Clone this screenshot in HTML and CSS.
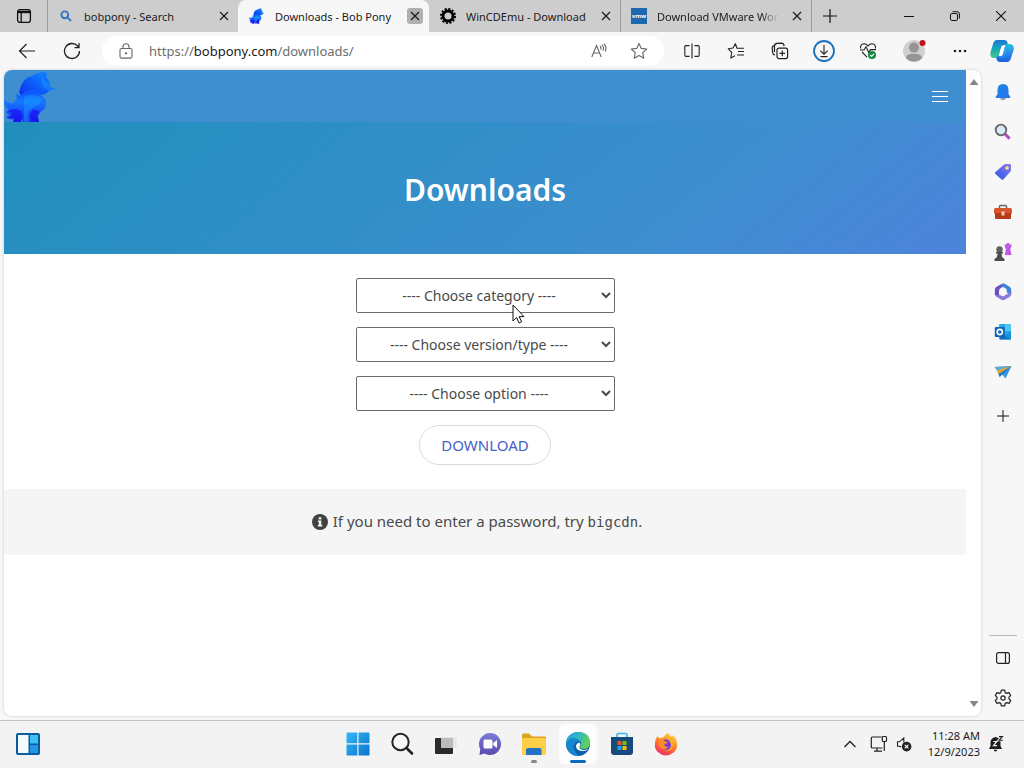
FILE: index.html
```html
<!DOCTYPE html>
<html lang="en">
<head>
    <meta charset="UTF-8">
    <meta name="viewport" content="width=device-width, initial-scale=1.0">
    <title>Downloads - Bob Pony</title>
    <link rel="stylesheet" href="styles.css">
</head>
<body>

<!-- shared shapes -->
<svg class="defs" width="0" height="0" aria-hidden="true">
    <defs>
        <linearGradient id="g-pony" x1="0" y1="0" x2="0" y2="1">
            <stop offset="0" stop-color="#0e7cff"/><stop offset="0.4" stop-color="#0b58fa"/><stop offset="0.6" stop-color="#1478ff"/><stop offset="1" stop-color="#1a28f5"/>
        </linearGradient>
        <linearGradient id="g-mane" x1="0" y1="1" x2="1" y2="0">
            <stop offset="0" stop-color="#0c2cf0"/><stop offset="1" stop-color="#0e8aff"/>
        </linearGradient>
        <linearGradient id="g-blue" x1="0" y1="0" x2="1" y2="1">
            <stop offset="0" stop-color="#35b8f5"/><stop offset="1" stop-color="#0873cf"/>
        </linearGradient>
        <linearGradient id="g-bell" x1="0" y1="0" x2="1" y2="1">
            <stop offset="0" stop-color="#1a8ae0"/><stop offset="1" stop-color="#2f6ff5"/>
        </linearGradient>
        <linearGradient id="g-tag" x1="0" y1="1" x2="1" y2="0">
            <stop offset="0" stop-color="#2b55e0"/><stop offset="1" stop-color="#8a7cf5"/>
        </linearGradient>
        <linearGradient id="g-cop1" x1="0" y1="0" x2="0" y2="1">
            <stop offset="0" stop-color="#1c79d4"/><stop offset="0.5" stop-color="#17a6b8"/><stop offset="1" stop-color="#49c98a"/>
        </linearGradient>
        <linearGradient id="g-cop2" x1="0" y1="0" x2="0" y2="1">
            <stop offset="0" stop-color="#1fc4d8"/><stop offset="0.5" stop-color="#2a8af0"/><stop offset="1" stop-color="#1a5fe0"/>
        </linearGradient>
        <linearGradient id="g-edge" x1="0" y1="0" x2="1" y2="0.3">
            <stop offset="0" stop-color="#1b9de0"/><stop offset="0.5" stop-color="#2bb8c8"/><stop offset="1" stop-color="#5fd05a"/>
        </linearGradient>
        <linearGradient id="g-chat" x1="0" y1="0" x2="0" y2="1">
            <stop offset="0" stop-color="#7a7ed8"/><stop offset="1" stop-color="#5a48b0"/>
        </linearGradient>
        <linearGradient id="g-fox" x1="0.8" y1="0" x2="0.3" y2="1">
            <stop offset="0" stop-color="#ffd83a"/><stop offset="0.45" stop-color="#ff8a2a"/><stop offset="1" stop-color="#f02a6a"/>
        </linearGradient>
        <symbol id="pony" viewBox="0 0 54 54">
            <path fill="url(#g-pony)" d="M16 19Q19 8 28 6Q33 3 39 2L43 3L42 7Q46 11 46 17L51 19L45 21Q42 25 36 25Q42 28 42 33Q41 41 36 42L34 46L35 52H19L18 48L17 52H9L10 49Q4 50 2 47L7 45Q2 45 2 41L5 40Q0 37 0 30Q4 34 9 33L13 29L12 24L16 26Z"/>
            <path fill="url(#g-mane)" d="M16 19Q19 8 28 6Q33 3 39 2Q35 7 37 13Q39 19 42 22Q34 20 28 20Q20 20 18 25L15 23Z"/>
            <path fill="#18a0ff" opacity="0.45" d="M39 4Q38 10 44 12Q46 15 46 17L51 19L45 21L40 18Q35 11 39 4ZM20 27Q30 22 39 29Q38 34 31 36L24 42L25 52H20L20 43Z"/>
            <path fill="#1a0af0" opacity="0.65" d="M4 41Q11 37 17 41Q19 46 17 52H9L10 48L4 47L9 44ZM28 40Q33 39 36 42L33 46L35 52H28L26 46Z"/>
        </symbol>
        <symbol id="close" viewBox="0 0 12 12">
            <path d="M2 2L10 10M10 2L2 10" stroke="currentColor" stroke-width="1.2" fill="none"/>
        </symbol>
    </defs>
</svg>

<header class="tabs">
    <button class="tab-actions" aria-label="Tab actions">
        <svg width="16" height="16" viewBox="0 0 16 16" fill="none" stroke="#111" stroke-width="1.3"><rect x="1.6" y="1.6" width="12.8" height="12.8" rx="2.5"/><path d="M2 4H14" stroke-width="2.4"/><path d="M5.2 5V14"/></svg>
    </button>
    <div class="tab">
        <svg width="16" height="16" viewBox="0 0 16 16" fill="none" stroke="#2f77c0" stroke-width="1.9"><circle cx="6.8" cy="6.8" r="3.4"/><path d="M9.4 9.4L13 13"/></svg>
        <span class="tab-title">bobpony - Search</span>
        <button class="tab-close" aria-label="Close tab"><svg width="12" height="12"><use href="#close"/></svg></button>
    </div>
    <div class="tab active">
        <svg width="16" height="16"><use href="#pony"/></svg>
        <span class="tab-title">Downloads - Bob Pony</span>
        <button class="tab-close" aria-label="Close tab"><svg width="12" height="12"><use href="#close"/></svg></button>
    </div>
    <div class="tab">
        <svg width="16" height="16" viewBox="0 0 16 16" fill="none" stroke="#000"><circle cx="8" cy="8" r="5" stroke-width="2.8"/><circle cx="8" cy="8" r="7.1" stroke-width="1.8" stroke-dasharray="2.2 1.52"/></svg>
        <span class="tab-title">WinCDEmu - Download</span>
        <button class="tab-close" aria-label="Close tab"><svg width="12" height="12"><use href="#close"/></svg></button>
    </div>
    <div class="tab">
        <svg width="16" height="16" viewBox="0 0 16 16"><rect width="16" height="16" fill="#1c68b0"/><text x="8" y="10" class="vmw" text-anchor="middle">vmw</text></svg>
        <span class="tab-title fade">Download VMware Wor</span>
        <button class="tab-close" aria-label="Close tab"><svg width="12" height="12"><use href="#close"/></svg></button>
    </div>
    <button class="new-tab" aria-label="New tab">
        <svg width="14" height="14" viewBox="0 0 14 14" stroke="#111" stroke-width="1.2"><path d="M7 0V14M0 7H14"/></svg>
    </button>
    <div class="window-controls">
        <button aria-label="Minimize"><svg width="10" height="10" viewBox="0 0 10 10" stroke="#111"><path d="M0 5.5H10"/></svg></button>
        <button aria-label="Restore"><svg width="10" height="10" viewBox="0 0 10 10" stroke="#111" fill="none"><rect x="0.5" y="2.5" width="7" height="7" rx="1.3"/><path d="M2.5 0.7H7Q9.4 0.7 9.4 3V7.5"/></svg></button>
        <button aria-label="Close"><svg width="10" height="10" viewBox="0 0 10 10" stroke="#111" stroke-width="1.1"><path d="M0 0L10 10M10 0L0 10"/></svg></button>
    </div>
</header>

<nav class="toolbar">
    <button class="nav-button" aria-label="Back"><svg width="18" height="16" viewBox="0 0 18 16" fill="none" stroke="#222" stroke-width="1.2"><path d="M17 8H1.5M8.5 1L1.5 8L8.5 15"/></svg></button>
    <button class="nav-button" aria-label="Refresh"><svg width="18" height="18" viewBox="0 0 18 18" fill="none" stroke="#222" stroke-width="1.3"><path d="M16.5 9A7.5 7.5 0 1 1 14.6 4L16 5.5M16 1V5.6H11.5"/></svg></button>
    <div class="address">
        <svg width="14" height="16" viewBox="0 0 14 16" fill="none" stroke="#666" stroke-width="1.1"><rect x="1" y="5.5" width="12" height="9.6" rx="1.6"/><path d="M4 5.5V3.8A3 3 0 0 1 10 3.8V5.5"/><circle cx="7" cy="10.3" r="0.6" fill="#555"/></svg>
        <a class="url" href="#">https://<b>bobpony.com</b>/downloads/</a>
        <button aria-label="Read aloud"><svg width="16" height="16" viewBox="0 0 16 16" fill="none" stroke="#666" stroke-width="1.1"><path d="M0.8 14L5.5 2.5L10.2 14M2.5 10H8.6M9 3Q10.5 4.5 9.7 6.8M11 1.6Q13.4 4.2 12 7.6M13 0.6Q16.2 4.2 14.2 8.4"/></svg></button>
        <button aria-label="Add to favorites"><svg width="18" height="18" viewBox="0 0 18 18" fill="none" stroke="#666" stroke-width="1.1" stroke-linejoin="round"><path d="M9 1.5L11.3 6.4L16.7 7L12.7 10.7L13.8 16.2L9 13.5L4.2 16.2L5.3 10.7L1.3 7L6.7 6.4Z"/></svg></button>
    </div>
    <button class="tool" aria-label="Split screen"><svg width="16" height="16" viewBox="0 0 16 16" fill="none" stroke="#222" stroke-width="1.1"><path d="M5.5 2.6H2Q0.8 2.6 0.8 4V12Q0.8 13.4 2 13.4H5.5M10.5 2.6H14Q15.2 2.6 15.2 4V12Q15.2 13.4 14 13.4H10.5M8 0.5V15.5"/></svg></button>
    <button class="tool" aria-label="Favorites"><svg width="18" height="18" viewBox="0 0 18 18" fill="none" stroke="#222" stroke-width="1.1" stroke-linejoin="round"><path d="M9.5 6.2H10L8.4 1.8L6 6L1.3 6.8L4.7 10.4L3.8 16L8 13.8M9.5 6.2H17M11 9.5H17M10 13H17"/></svg></button>
    <button class="tool" aria-label="Collections"><svg width="18" height="18" viewBox="0 0 18 18" fill="none" stroke="#222" stroke-width="1.2"><rect x="6" y="6.2" width="10.6" height="10.4" rx="2"/><path d="M11.3 8.6V14.2M8.5 11.4H14.1M4 13Q1.8 12.6 1.6 10.4L1.2 6Q1.1 4 3 3.6L3.6 3.5M3.5 10V4.2Q3.5 1.6 6 1.4L10.5 1.2Q12.6 1.2 13.2 4"/></svg></button>
    <button class="tool" aria-label="Downloads"><svg width="22" height="22" viewBox="0 0 22 22" fill="none" stroke="#222" stroke-width="1.1"><circle cx="11" cy="11" r="10" stroke="#1a70c0" stroke-width="1.8"/><path d="M11 5V14M7.3 10.6L11 14.2L14.7 10.6M7.5 16.6H14.5"/></svg></button>
    <button class="tool" aria-label="Browser essentials"><svg width="18" height="18" viewBox="0 0 18 18" fill="none" stroke="#222" stroke-width="1.1"><path d="M1.6 6.5Q1 2 5 1.8Q7.5 1.8 9 4Q10.5 1.8 13 1.8Q17 2 16.4 6.5M3 10L8 15.2M1 8H5L7 4.8L9.8 10.5L11.4 7.6H17"/><circle cx="13" cy="13" r="4" fill="#12893a" stroke="none"/><path d="M11.2 13L12.6 14.4L15 11.8" stroke="#fff"/></svg></button>
    <button class="profile" aria-label="Profile">
        <svg width="24" height="24" viewBox="0 0 24 24"><circle cx="12" cy="12" r="11" fill="#d2d0ce"/><circle cx="12" cy="8.6" r="5" fill="#979593"/><path d="M4 19Q4 14.8 12 14.8T20 19Q17 22.6 12 22.6T4 19Z" fill="#979593"/><circle cx="20.5" cy="4" r="3" fill="#c50f1f"/></svg>
    </button>
    <button class="tool" aria-label="Settings and more"><svg width="16" height="4" viewBox="0 0 16 4" fill="#222"><circle cx="3" cy="2" r="1.3"/><circle cx="8" cy="2" r="1.3"/><circle cx="13" cy="2" r="1.3"/></svg></button>
    <button class="copilot" aria-label="Copilot">
        <svg width="24" height="22" viewBox="0 0 24 22"><path fill="url(#g-cop1)" d="M7 0H14Q17 0 17.6 3L18 5H14Q12 5 11.4 7L9 15Q8 18 5 18H3Q-0.6 17 0.6 12L3 4Q4 0 7 0Z"/><path fill="url(#g-cop2)" d="M16 4H20Q24.8 5 23.6 10L21 18Q20 22 17 22H10Q7 22 6.2 18L6 17Q8.5 17 9.4 14L12 6H15Z"/><path fill="#fff" d="M11.5 6H15.2L12.8 14.6Q12.4 16 11 16H8.8Z"/><path fill="#26a7ee" opacity="0.5" d="M15 6H18L15.5 14Q14.6 17 12 18L8 17Q11.7 17.3 12.8 14Z"/></svg>
    </button>
</nav>

<main class="window">
    <div class="page">
        <div class="content">
            <div class="navbar">
                <a href="#" class="brand" aria-label="Bob Pony"><svg width="54" height="54"><use href="#pony"/></svg></a>
                <button class="burger" aria-label="Menu"><span></span><span></span><span></span></button>
            </div>
            <section class="hero">
                <h1>Downloads</h1>
            </section>
            <form class="downloads">
                <select aria-label="Category">
                    <option>---- Choose category ----</option>
                </select>
                <select aria-label="Version or type">
                    <option>---- Choose version/type ----</option>
                </select>
                <select aria-label="Option">
                    <option>---- Choose option ----</option>
                </select>
                <button type="button" class="download-button">DOWNLOAD</button>
            </form>
            <div class="notice">
                <svg width="16" height="16" viewBox="0 0 16 16"><circle cx="8" cy="8" r="8" fill="#424242"/><path fill="#f5f5f5" d="M6.7 3.2H9.3V5.4H6.7ZM6 6.6H9.3V11H10.3V12.5H5.8V11H6.8V8H6Z"/></svg>
                <p>If you need to enter a password, try <code>bigcdn</code>.</p>
            </div>
        </div>
        <div class="scrollbar">
            <svg width="10" height="8" viewBox="0 0 10 8" fill="#858585"><path d="M5 1L9.4 7H0.6Z"/></svg>
            <svg width="10" height="8" viewBox="0 0 10 8" fill="#858585"><path d="M5 7L9.4 1H0.6Z"/></svg>
        </div>
    </div>

    <aside class="sidebar">
        <button aria-label="Notifications"><svg width="18" height="18" viewBox="0 0 18 18"><path d="M6 14.5H12Q11.5 17.3 9 17.3T6 14.5Z" fill="#8ba0b5"/><path d="M9 1Q14.5 1 14.5 7V11L16.4 14Q16.5 15 15.5 15H2.5Q1.5 15 1.6 14L3.5 11V7Q3.5 1 9 1Z" fill="url(#g-bell)"/></svg></button>
        <button aria-label="Search"><svg width="18" height="18" viewBox="0 0 18 18" fill="none"><path d="M11 11L15.6 15.6" stroke="#b04cc8" stroke-width="3"/><circle cx="7" cy="7" r="5.3" fill="#d8e9f5" stroke="#666" stroke-width="1.8"/></svg></button>
        <button aria-label="Shopping"><svg width="18" height="18" viewBox="0 0 18 18"><path d="M9.5 2Q10.5 1 12 1H16Q17 1 17 2V7Q17 8 16 9L9.5 16.3Q8.5 17.4 7.4 16.3L1.5 11Q0.4 10 1.5 9Z" fill="url(#g-tag)"/><circle cx="13" cy="5" r="1.8" fill="#ffe36b"/></svg></button>
        <button aria-label="Tools"><svg width="20" height="18" viewBox="0 0 20 18"><path d="M6.5 6V3.5Q6.5 2.5 7.5 2.5H12.5Q13.5 2.5 13.5 3.5V6" fill="none" stroke="#666" stroke-width="1.5"/><rect x="1" y="5" width="18" height="6" rx="1.5" fill="#d9532b"/><path d="M2 10H18V15Q18 16 17 16H3Q2 16 2 15Z" fill="#b63b18"/><rect x="8.5" y="8.5" width="3" height="4" fill="#f2d0b8"/></svg></button>
        <button aria-label="Games"><svg width="20" height="20" viewBox="0 0 20 20"><path d="M11.5 1.5L13 3L14 1H16L17 3L18.8 1.5L18 6L17.2 7L18.5 13H11.8L13 7L12.2 6Z" fill="#c05ae6"/><circle cx="6.5" cy="7.5" r="3.2" fill="#606060"/><path d="M3 10H10V11.5H8.5L9 15L11.5 17V19H1.5V17L4 15L4.6 11.5H3Z" fill="#4c4c4c"/></svg></button>
        <button aria-label="Microsoft 365"><svg width="18" height="18" viewBox="0 0 18 18"><path d="M8 0.8L2.2 4Q0.8 5 0.8 7V12L5 14.2V8Q5 6 6.8 5L11 2.5Z" fill="#6c4fc0"/><path d="M8 0.8Q10 0 12 1.4L16 4Q17.2 5 17.2 7V12L12.8 9.5V7.2Q12.8 6 11 5L7 3Z" fill="#3d85dc"/><path d="M17.2 8.5V11Q17.2 13 15.5 14L11 16.6Q9 17.8 7 16.6L1.6 13.3L5 11.5L8 13Q9 13.6 10 13L12.8 11.2Z" fill="#8878dc"/></svg></button>
        <button aria-label="Outlook"><svg width="18" height="18" viewBox="0 0 18 18"><rect x="5" y="1" width="12" height="15.5" rx="1" fill="#28a8ea"/><path d="M11 1H17V8H11Z" fill="#50c5f2"/><path d="M5 9L17 16.5H6Z" fill="#0f6fc2"/><path d="M17 8V16.5L10.5 12.2Z" fill="#1493dc"/><rect x="0.8" y="4" width="10" height="10" rx="1" fill="#0d63b5"/><circle cx="5.8" cy="9" r="2.6" fill="none" stroke="#fff" stroke-width="1.6"/></svg></button>
        <button aria-label="Drop"><svg width="18" height="16" viewBox="0 0 18 16"><path d="M0.5 3L17.5 2L11.5 14.5L8.2 10.5Z" fill="#3794e6"/><path d="M0.5 3L17.5 2L3.5 7.5Z" fill="#65a9ca"/><path d="M17.5 2L4.5 11L3 6.5Z" fill="#dfa82c"/><path d="M17.5 2L5.5 13.2L4.5 10Z" fill="#2678cf"/></svg></button>
        <button class="add" aria-label="Add"><svg width="12" height="12" viewBox="0 0 12 12" stroke="#111" stroke-width="1"><path d="M6 0V12M0 6H12"/></svg></button>
        <div class="sidebar-bottom">
            <button aria-label="Hide sidebar"><svg width="16" height="14" viewBox="0 0 16 14" fill="none" stroke="#222" stroke-width="1.2"><rect x="1.6" y="1.6" width="12.8" height="10.8" rx="2"/><path d="M10.5 1.6V12.4"/></svg></button>
            <button aria-label="Settings"><svg width="18" height="18" viewBox="0 0 18 18" fill="none" stroke="#222" stroke-width="1.2" stroke-linejoin="round"><path d="M7.3 1.2H10.7L11.2 3.6L12.7 4.4L15 3.6L16.7 6.5L15 8.1V9.9L16.7 11.5L15 14.4L12.7 13.6L11.2 14.4L10.7 16.8H7.3L6.8 14.4L5.3 13.6L3 14.4L1.3 11.5L3 9.9V8.1L1.3 6.5L3 3.6L5.3 4.4L6.8 3.6Z"/><circle cx="9" cy="9" r="2.2"/></svg></button>
        </div>
    </aside>
</main>

<footer class="taskbar">
    <div class="taskbar-left">
        <button aria-label="Widgets"><svg width="26" height="24" viewBox="0 0 26 24"><rect x="1" y="1" width="24" height="22" rx="2" fill="#0b5a9c"/><rect x="3" y="3" width="10.5" height="18" fill="#f4fbff"/><rect x="15" y="3" width="8" height="8.5" fill="#3cc0f5"/><rect x="15" y="13" width="8" height="8" fill="#2397e5"/></svg></button>
    </div>
    <div class="apps">
        <button aria-label="Start"><svg width="24" height="24" viewBox="0 0 24 24" fill="url(#g-blue)"><path d="M1.5 0.5H11.3V11.3H0.5V1.5Q0.5 0.5 1.5 0.5ZM12.5 0.5H22.5Q23.5 0.5 23.5 1.5V11.3H12.5ZM0.5 12.5H11.3V23.5H1.5Q0.5 23.5 0.5 22.5ZM12.5 12.5H23.5V22.5Q23.5 23.5 22.5 23.5H12.5Z"/></svg></button>
        <button aria-label="Search"><svg width="24" height="24" viewBox="0 0 24 24" fill="none"><circle cx="10.5" cy="10" r="8.2" fill="#f5f8fa" stroke="#252525" stroke-width="2"/><path d="M16.5 16L22 21.5" stroke="#252525" stroke-width="2.6" stroke-linecap="round"/></svg></button>
        <button aria-label="Task view"><svg width="24" height="24" viewBox="0 0 24 24"><rect x="1" y="6" width="18" height="16" rx="1" fill="#2b2b2b"/><rect x="7" y="5" width="16" height="11" rx="1" fill="#e8e8e8"/><path d="M7 6H19V16H7Z" fill="#bcbcbc"/></svg></button>
        <button aria-label="Chat"><svg width="24" height="24" viewBox="0 0 24 24"><path d="M12 1A11 11 0 1 1 6.5 21.5L1.5 23L2.2 17A11 11 0 0 1 12 1Z" fill="url(#g-chat)"/><rect x="5.5" y="7.5" width="9" height="9" rx="1.5" fill="#fff"/><path d="M15.2 11L19 8V16L15.2 13Z" fill="#fff"/></svg></button>
        <button class="running" aria-label="File Explorer"><svg width="26" height="24" viewBox="0 0 26 24"><path d="M1 3Q1 1.5 2.5 1.5H8L11 4.5H24Q25 4.5 25 6V12H1Z" fill="#dca11d"/><rect x="1" y="6" width="24" height="17" rx="1.2" fill="#ffcf48"/><path d="M5 23V18Q5 16 7 16H18.5Q20.5 16 20.5 18V23Z" fill="#2372c5"/></svg></button>
        <button class="running current" aria-label="Microsoft Edge"><svg width="26" height="26" viewBox="0 0 26 26"><circle cx="13" cy="13" r="12" fill="#0c5fa8"/><path d="M1 13A12 12 0 0 1 13 1Q25 1.2 25 12Q24.5 18 18.5 18Q14.8 18 15 15.5Q17 13.5 15.5 10.5Q13 7 8 7.5Q3 8.5 1 13Z" fill="url(#g-edge)"/><path d="M1 13Q3 8 8.5 7.5Q14 7.5 15.5 11Q12 9.5 10 12Q6 18 14.2 25Q2.5 25 1 13Z" fill="#1686d2"/><path d="M14.5 15.5Q14 18.5 18.5 19Q21 19 23.5 17.5Q21.5 20 18.5 20Q11.5 20 11 15.5Q11 12.5 14 11.4Q16.5 12.6 14.5 15.5Z" fill="#fff"/></svg></button>
        <button aria-label="Microsoft Store"><svg width="24" height="24" viewBox="0 0 24 24"><path d="M7 6V3Q7 1.5 8.5 1.5H15.5Q17 1.5 17 3V6" fill="none" stroke="#38b6ed" stroke-width="1.6"/><path d="M1 5H23V20Q23 23 20 23H4Q1 23 1 20Z" fill="#164a7b"/><rect x="7.5" y="9" width="4" height="4" fill="#f25022"/><rect x="12.5" y="9" width="4" height="4" fill="#7fba00"/><rect x="7.5" y="14" width="4" height="4" fill="#22a4ef"/><rect x="12.5" y="14" width="4" height="4" fill="#ffb900"/></svg></button>
        <button aria-label="Firefox"><svg width="24" height="24" viewBox="0 0 24 24"><path d="M3.5 4L5.5 6.5Q8 5 9.5 5.2Q11 2.5 14.5 1Q15 3.5 18 5L19 3Q23.2 7 23.2 13A11.2 10.4 0 0 1 0.8 13Q0.8 7.5 3.5 4Z" fill="url(#g-fox)"/><circle cx="12" cy="12.6" r="5.4" fill="#7940cf"/><path d="M4 9Q8 7 11.5 9.5L14 10Q12.5 12 10.5 12Q10 15.5 14.5 14.5Q12 18.5 8 17Q4 15 4 9Z" fill="#ff8a24"/><path d="M13 6Q19.5 7 19 13Q18 19.5 11 19Q17.5 17.5 17 12.5Q16.5 9 13 6Z" fill="#ffad2e"/></svg></button>
    </div>
    <div class="tray">
        <button aria-label="Show hidden icons"><svg width="12" height="8" viewBox="0 0 12 8" fill="none" stroke="#222" stroke-width="1.3"><path d="M0.5 7L6 1.5L11.5 7"/></svg></button>
        <button class="network" aria-label="Network"><svg width="18" height="18" viewBox="0 0 18 18" fill="none" stroke="#222" stroke-width="1.2"><path d="M11.5 2H2.5Q1.3 2 1.3 3.2V12Q1.3 13 2.5 13H12.5M7 13V16M4 16.2H12M14.3 7V16"/><rect x="12.3" y="1.5" width="4.2" height="5" rx="1"/></svg></button>
        <button aria-label="Volume muted"><svg width="16" height="16" viewBox="0 0 16 16" fill="none" stroke="#222" stroke-width="1.1"><path d="M5 11L3.5 10.2H1.5V5.8H3.5L7.8 2V6.5"/><circle cx="10.6" cy="10.6" r="4.8" fill="#222" stroke="none"/><path d="M8.8 8.8L12.4 12.4M12.4 8.8L8.8 12.4" stroke="#fff" stroke-width="1.2"/></svg></button>
        <div class="clock">
            <time>11:28 AM</time>
            <time>12/9/2023</time>
        </div>
        <button aria-label="Do not disturb"><svg width="16" height="18" viewBox="0 0 16 18"><path d="M7.5 2Q12.5 3 12.5 7.5V11L14 14H1L2.5 11V7.5Q2.5 3 7.5 2ZM5.5 14.8H9.5Q9 16.6 7.5 16.6T5.5 14.8Z" fill="#1c1c1c"/><path d="M5.3 6.5H8.8L5.5 10.6H9" fill="none" stroke="#f3f3f3" stroke-width="1.2"/><path d="M11 1.8H14.4L11.2 5H14.8" fill="none" stroke="#f3f3f3" stroke-width="2.6"/><path d="M11 1.6H14.4L11.2 5.2H14.8" fill="none" stroke="#1c1c1c" stroke-width="1.1"/></svg></button>
    </div>
</footer>

<svg class="cursor" width="13" height="20" viewBox="0 0 13 20" aria-hidden="true"><path d="M1 1V17L4.6 13.6L7 19L9.6 17.8L7.2 12.6H12Z" fill="#fff" stroke="#111"/></svg>

</body>
</html>
```
FILE: styles.css
```css
* {
    box-sizing: border-box;
}
body {
    margin: 0;
    min-height: 100vh;
    display: flex;
    flex-direction: column;
    font-family: "Noto Sans", "Open Sans", sans-serif;
    font-size: 11px;
    color: #1b1b1b;
    background-color: #f7f7f7;
    position: relative;
}
button {
    display: flex;
    align-items: center;
    justify-content: center;
    padding: 0;
    border: none;
    background: none;
    font-family: inherit;
    color: inherit;
}
svg {
    flex-shrink: 0;
    display: block;
}
.defs {
    position: absolute;
}

/* tab strip */
.tabs {
    display: flex;
    height: 32px;
    background-color: #cdcdcd;
}
.tab-actions {
    width: 47px;
}
.tab {
    flex: 0 1 191px;
    min-width: 0;
    display: flex;
    align-items: center;
    gap: 10px;
    padding: 0 6px 0 10px;
    border-left: 1px solid #9a9a9a;
    background-clip: padding-box;
}
.tab.active {
    background-color: #f7f7f7;
    border-color: #f7f7f7;
    border-radius: 8px 8px 0 0;
}
.tab.active + .tab {
    border-color: transparent;
}
.tab-title {
    flex: 1;
    min-width: 0;
    overflow: hidden;
    white-space: nowrap;
}
.tab-title.fade {
    -webkit-mask-image: linear-gradient(to right, #000 85%, transparent);
    mask-image: linear-gradient(to right, #000 85%, transparent);
}
.tab-close {
    width: 16px;
    height: 16px;
    border-radius: 3px;
}
.active .tab-close {
    background-color: #b0b0b0;
}
.vmw {
    font-size: 6px;
    font-weight: bold;
    fill: #fff;
}
.new-tab {
    width: 36px;
    border-left: 1px solid #9a9a9a;
}
.window-controls {
    display: flex;
    margin-left: auto;
}
.window-controls button {
    width: 46px;
}

/* toolbar */
.toolbar {
    display: flex;
    align-items: center;
    height: 38px;
    padding: 0 2px 0 4px;
}
.nav-button {
    width: 45px;
}
.address {
    flex: 1;
    min-width: 0;
    display: flex;
    align-items: center;
    height: 30px;
    margin: 0 6px 0 8px;
    padding: 0 5px 0 17px;
    border-radius: 15px;
    background-color: #fff;
}
.address button {
    width: 40px;
}
.url {
    flex: 1;
    min-width: 0;
    overflow: hidden;
    margin-left: 16px;
    font-size: 13px;
    color: #6e6e6e;
    text-decoration: none;
}
.url b {
    font-weight: normal;
    color: #1b1b1b;
}
.tool {
    width: 44px;
}
.profile {
    width: 48px;
}
.copilot {
    width: 40px;
}

/* web page */
.window {
    flex: 1;
    display: flex;
    padding-left: 4px;
}
.page {
    flex: 1;
    min-width: 0;
    display: flex;
    overflow: hidden;
    margin-bottom: 4px;
    border-radius: 8px;
    background-color: #fff;
    box-shadow: 0 0 3px #c4c4c4;
}
.content {
    flex: 1;
    min-width: 0;
}
.scrollbar {
    width: 15px;
    display: flex;
    flex-direction: column;
    align-items: center;
    justify-content: space-between;
    padding: 8px 0;
}
.navbar {
    display: flex;
    justify-content: space-between;
    height: 52px;
    background-color: #3e8ed0;
}
.burger {
    width: 52px;
    flex-direction: column;
    gap: 4px;
}
.burger span {
    width: 16px;
    height: 1px;
    background-color: #fff;
}
.hero {
    padding: 48px 24px 44px;
    text-align: center;
    color: #fff;
    background-image: linear-gradient(141deg, #208fbc 0%, #3e8ed0 71%, #4d83db 100%);
}
.hero h1 {
    margin: 0;
    font-size: 30px;
    font-weight: 600;
    line-height: 40px;
}
.downloads {
    display: flex;
    flex-direction: column;
    align-items: center;
    gap: 14px;
    padding: 24px;
}
.downloads select {
    width: 259px;
    height: 35px;
    border: 1px solid #6b6b6b;
    border-radius: 2px;
    background-color: #fff;
    font-family: inherit;
    font-size: 14px;
    color: #4a4a4a;
    text-align: center;
}
.download-button {
    width: 132px;
    height: 40px;
    border: 1px solid #dbdbdb;
    border-radius: 20px;
    font-size: 15px;
    color: #485fc7;
}
.notice {
    display: flex;
    align-items: center;
    justify-content: center;
    gap: 5px;
    padding: 20px 40px 20px 24px;
    background-color: #f5f5f5;
    border-radius: 4px;
    font-size: 15px;
    line-height: 25px;
    color: #4a4a4a;
}
.notice p {
    margin: 0;
}
.notice code {
    font-family: "DejaVu Sans Mono", monospace;
    font-size: 14px;
}

/* sidebar */
.sidebar {
    width: 43px;
    display: flex;
    flex-direction: column;
    align-items: center;
    padding: 2px 0;
}
.sidebar button {
    width: 40px;
    height: 40px;
}
.sidebar .add {
    margin-top: 4px;
}
.sidebar-bottom {
    margin-top: auto;
    padding-top: 2px;
    border-top: 1px solid #b8b8b8;
    width: 28px;
    display: flex;
    flex-direction: column;
    align-items: center;
}

/* taskbar */
.taskbar {
    display: grid;
    grid-template-columns: 1fr auto 1fr;
    height: 48px;
    padding-bottom: 1px;
    border-top: 1px solid #c4c4c4;
    background-color: #f3f3f3;
}
.taskbar-left {
    display: flex;
    padding-left: 15px;
}
.apps {
    display: flex;
    align-items: center;
}
.apps button {
    width: 44px;
    height: 40px;
    position: relative;
}
.apps .current {
    background-color: #fdfdfd;
    background-clip: content-box;
    padding: 0 3px;
    border-radius: 8px;
}
.running::after {
    content: "";
    position: absolute;
    bottom: 1px;
    left: 50%;
    width: 6px;
    height: 3px;
    margin-left: -3px;
    border-radius: 2px;
    background-color: #868686;
}
.current::after {
    width: 16px;
    margin-left: -8px;
    background-color: #0a6abf;
}
.tray {
    display: flex;
    align-items: center;
    justify-content: flex-end;
    gap: 8px;
    padding-right: 20px;
}
.network {
    margin-left: 6px;
}
.clock {
    display: flex;
    flex-direction: column;
    align-items: flex-end;
    margin-left: 8px;
    line-height: 16px;
}

/* mouse pointer over the page */
.cursor {
    position: absolute;
    left: 512px;
    top: 304px;
}
```
